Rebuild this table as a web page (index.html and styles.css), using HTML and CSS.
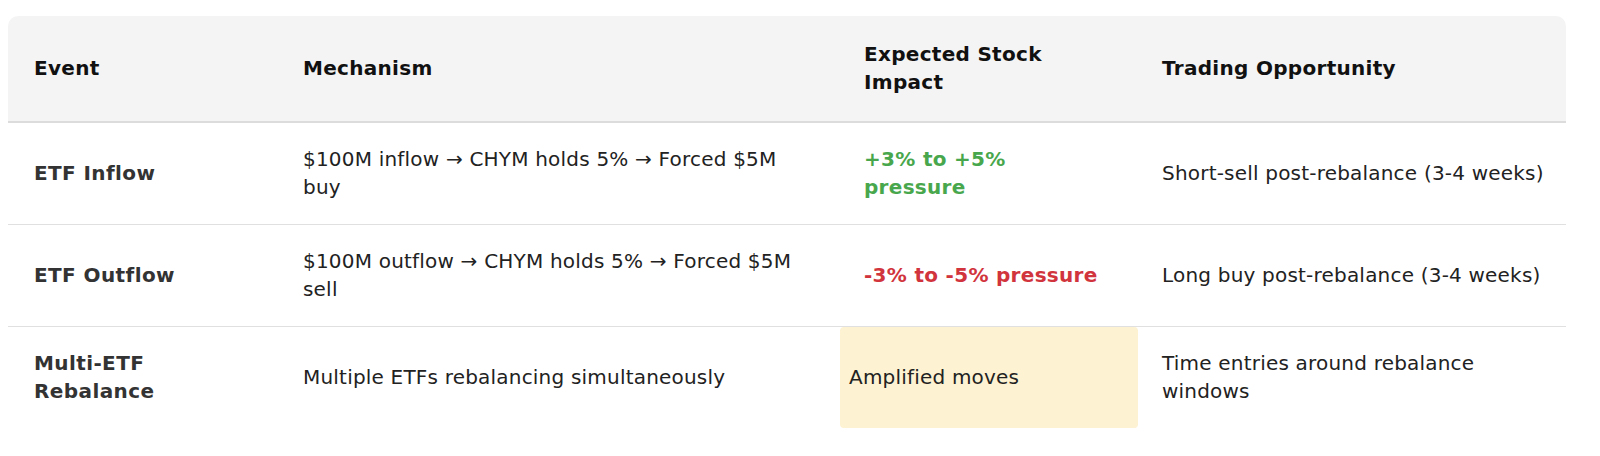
FILE: index.html
```html
<!DOCTYPE html>
<html lang="en">
<head>
<meta charset="utf-8">
<title>ETF Rebalance Events</title>
<link rel="stylesheet" href="styles.css">
</head>
<body>
<div class="table-wrap">
  <table class="events">
    <colgroup>
      <col class="c-event">
      <col class="c-mech">
      <col class="c-impact">
      <col class="c-opp">
    </colgroup>
    <thead>
      <tr>
        <th>Event</th>
        <th class="mech">Mechanism</th>
        <th class="impact">Expected Stock Impact</th>
        <th class="opp">Trading Opportunity</th>
      </tr>
    </thead>
    <tbody>
      <tr>
        <td class="event">ETF Inflow</td>
        <td class="mech">$100M inflow → CHYM holds 5% → Forced $5M buy</td>
        <td class="impact pos">+3% to +5% pressure</td>
        <td class="opp">Short-sell post-rebalance (3-4 weeks)</td>
      </tr>
      <tr>
        <td class="event">ETF Outflow</td>
        <td class="mech">$100M outflow → CHYM holds 5% → Forced $5M sell</td>
        <td class="impact neg">-3% to -5% pressure</td>
        <td class="opp">Long buy post-rebalance (3-4 weeks)</td>
      </tr>
      <tr class="last">
        <td class="event">Multi-ETF Rebalance</td>
        <td class="mech">Multiple ETFs rebalancing simultaneously</td>
        <td class="warn">Amplified moves</td>
        <td class="opp">Time entries around rebalance windows</td>
      </tr>
    </tbody>
  </table>
</div>
</body>
</html>
```

FILE: styles.css
```css
html, body {
  margin: 0;
  padding: 0;
  background: #ffffff;
}

body {
  padding: 16px 34px 0 8px;
  font-family: "DejaVu Sans", Verdana, sans-serif;
  font-size: 20px;
  line-height: 28px;
  letter-spacing: 0.2px;
  color: #222222;
}

.table-wrap {
  border-radius: 10px;
  overflow: hidden;
}

.events {
  width: 1558px;
  table-layout: fixed;
  border-collapse: separate;
  border-spacing: 0;
}

.c-event { width: 270px; }
.c-mech { width: 562px; }
.c-impact { width: 298px; }
.c-opp { width: 428px; }

.events th {
  background: #f4f4f4;
  text-align: left;
  vertical-align: middle;
  font-weight: bold;
  letter-spacing: 0.3px;
  color: #111111;
  padding: 24px 26px 25px 26px;
  border-bottom: 2px solid #dcdcdc;
}

.events td {
  vertical-align: middle;
  padding: 22px 26px 23px 26px;
  border-bottom: 1px solid #e0e0e0;
}

.events .mech {
  padding-left: 25px;
}

.events .impact {
  padding-left: 24px;
}

.events .opp {
  padding-left: 24px;
  padding-right: 14px;
}

.events tr.last td {
  border-bottom: none;
}

.events td.event {
  font-weight: bold;
  letter-spacing: 0.4px;
  color: #333333;
}

.events td.pos {
  font-weight: bold;
  letter-spacing: 0.3px;
  color: #48a74c;
}

.events td.neg {
  font-weight: bold;
  letter-spacing: 0.3px;
  color: #d1343c;
}

.events td.warn {
  background: #fdf2d1;
  border-radius: 4px;
  padding-left: 9px;
  padding-right: 9px;
}
```
